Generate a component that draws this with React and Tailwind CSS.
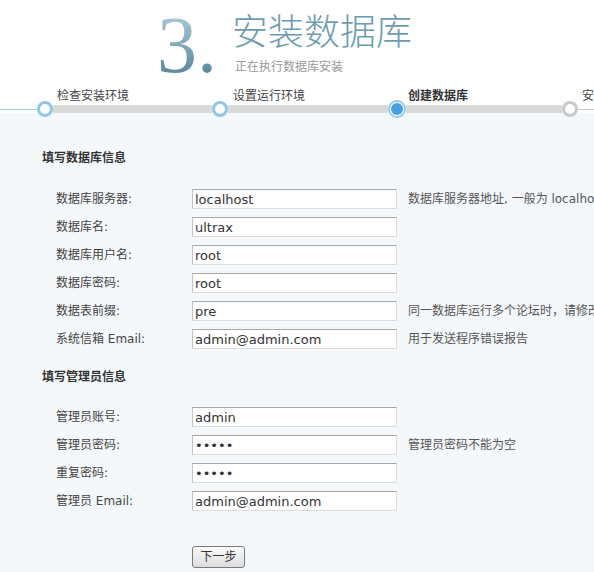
import React from "react";

const font = { fontFamily: '"DejaVu Sans", "Noto Sans CJK SC", sans-serif' };

const dbRows = [
  { label: "数据库服务器:", value: "localhost", hint: "数据库服务器地址, 一般为 localhost" },
  { label: "数据库名:", value: "ultrax" },
  { label: "数据库用户名:", value: "root" },
  { label: "数据库密码:", value: "root" },
  { label: "数据表前缀:", value: "pre", hint: "同一数据库运行多个论坛时，请修改前缀" },
  { label: "系统信箱 Email:", value: "admin@admin.com", hint: "用于发送程序错误报告" },
];

const adminRows = [
  { label: "管理员账号:", value: "admin" },
  { label: "管理员密码:", value: "admin", type: "password", hint: "管理员密码不能为空" },
  { label: "重复密码:", value: "admin", type: "password" },
  { label: "管理员 Email:", value: "admin@admin.com" },
];

const Row = ({ row }) => (
  <div className="flex items-center h-[28px] pl-[56px] whitespace-nowrap">
    <div className="w-[136px] shrink-0 text-[12px] leading-[16px] text-[#444]">{row.label}</div>
    <input
      readOnly
      type={row.type || "text"}
      value={row.value}
      style={font}
      className="w-[205px] h-[20px] shrink-0 px-[2px] pt-[1px] bg-white border border-[#dcdcdc] border-t-[#a8a8a8] border-l-[#c4c4c4] text-[13px] text-[#333] outline-none"
    />
    {row.hint && (
      <div className="ml-[11px] shrink-0 text-[12px] leading-[16px] text-[#555]">{row.hint}</div>
    )}
  </div>
);

const Circle = ({ gray }) => (
  <div
    className={
      gray
        ? "w-4 h-4 shrink-0 rounded-full border-[3px] border-[#c9c9c9] bg-white"
        : "w-4 h-4 shrink-0 rounded-full border-[3px] border-[#8fc7e4] bg-white"
    }
  />
);

const App = () => {
  return (
    <div
      style={font}
      className="w-[594px] h-[572px] overflow-hidden bg-[linear-gradient(to_bottom,#ffffff_113px,#f4f8fb_113px)]"
    >
      {/* header */}
      <div className="h-[88px] flex items-start pl-[157px] pt-[15px]">
        <span
          style={{ fontFamily: '"Liberation Serif", serif' }}
          className="-mt-[10px] text-[80px] leading-[80px] bg-linear-to-b from-[#b7d3e0] to-[#4b7d95] bg-clip-text text-transparent"
        >
          3.
        </span>
        <div className="ml-[15px]">
          <div className="text-[36px] leading-[36px] text-[#6b9cb1] font-light">安装数据库</div>
          <div className="mt-[8px] ml-[3px] text-[12px] leading-[16px] text-[#999]">正在执行数据库安装</div>
        </div>
      </div>

      {/* steps */}
      <div className="flex pl-[57px] h-[16px] text-[12px] leading-[16px] text-[#444] whitespace-nowrap">
        <div className="w-[176px] shrink-0">检查安装环境</div>
        <div className="w-[175px] shrink-0">设置运行环境</div>
        <div className="w-[174px] shrink-0 font-bold text-[#333]">创建数据库</div>
        <div className="shrink-0">安装</div>
      </div>
      <div className="flex items-center h-[18px] -mt-[4px]">
        <div className="w-[37px] h-px bg-[#a9d3e6] shrink-0" />
        <Circle />
        <div className="w-[159px] h-[8px] bg-[#dadada] shrink-0" />
        <Circle />
        <div className="w-[160px] h-[8px] bg-[#dadada] shrink-0" />
        <div className="w-[18px] h-[18px] shrink-0 rounded-full border-2 border-[#94cbe9] bg-white p-[1px]">
          <div className="w-full h-full rounded-full bg-[#48a0e2]" />
        </div>
        <div className="w-[156px] h-[8px] bg-[#dadada] shrink-0" />
        <Circle gray />
        <div className="flex-1 h-px bg-[#c9c9c9]" />
      </div>

      {/* body */}
      <div className="pt-[32px]">
        <div className="pl-[42px] text-[12px] leading-[16px] font-bold text-[#333]">填写数据库信息</div>
        <div className="mt-[19px]">
          {dbRows.map((row) => (
            <Row key={row.label} row={row} />
          ))}
        </div>

        <div className="mt-[16px] pl-[42px] text-[12px] leading-[16px] font-bold text-[#333]">填写管理员信息</div>
        <div className="mt-[18px]">
          {adminRows.map((row) => (
            <Row key={row.label} row={row} />
          ))}
        </div>

        <div className="mt-[29px] pl-[192px]">
          <button
            type="button"
            className="w-[53px] h-[22px] rounded-[3px] border border-[#7a7a7a] bg-linear-to-b from-[#fbfbfb] to-[#dcdcdc] text-[12px] text-[#333] leading-none"
          >
            下一步
          </button>
        </div>
      </div>
    </div>
  );
};

export default App;
